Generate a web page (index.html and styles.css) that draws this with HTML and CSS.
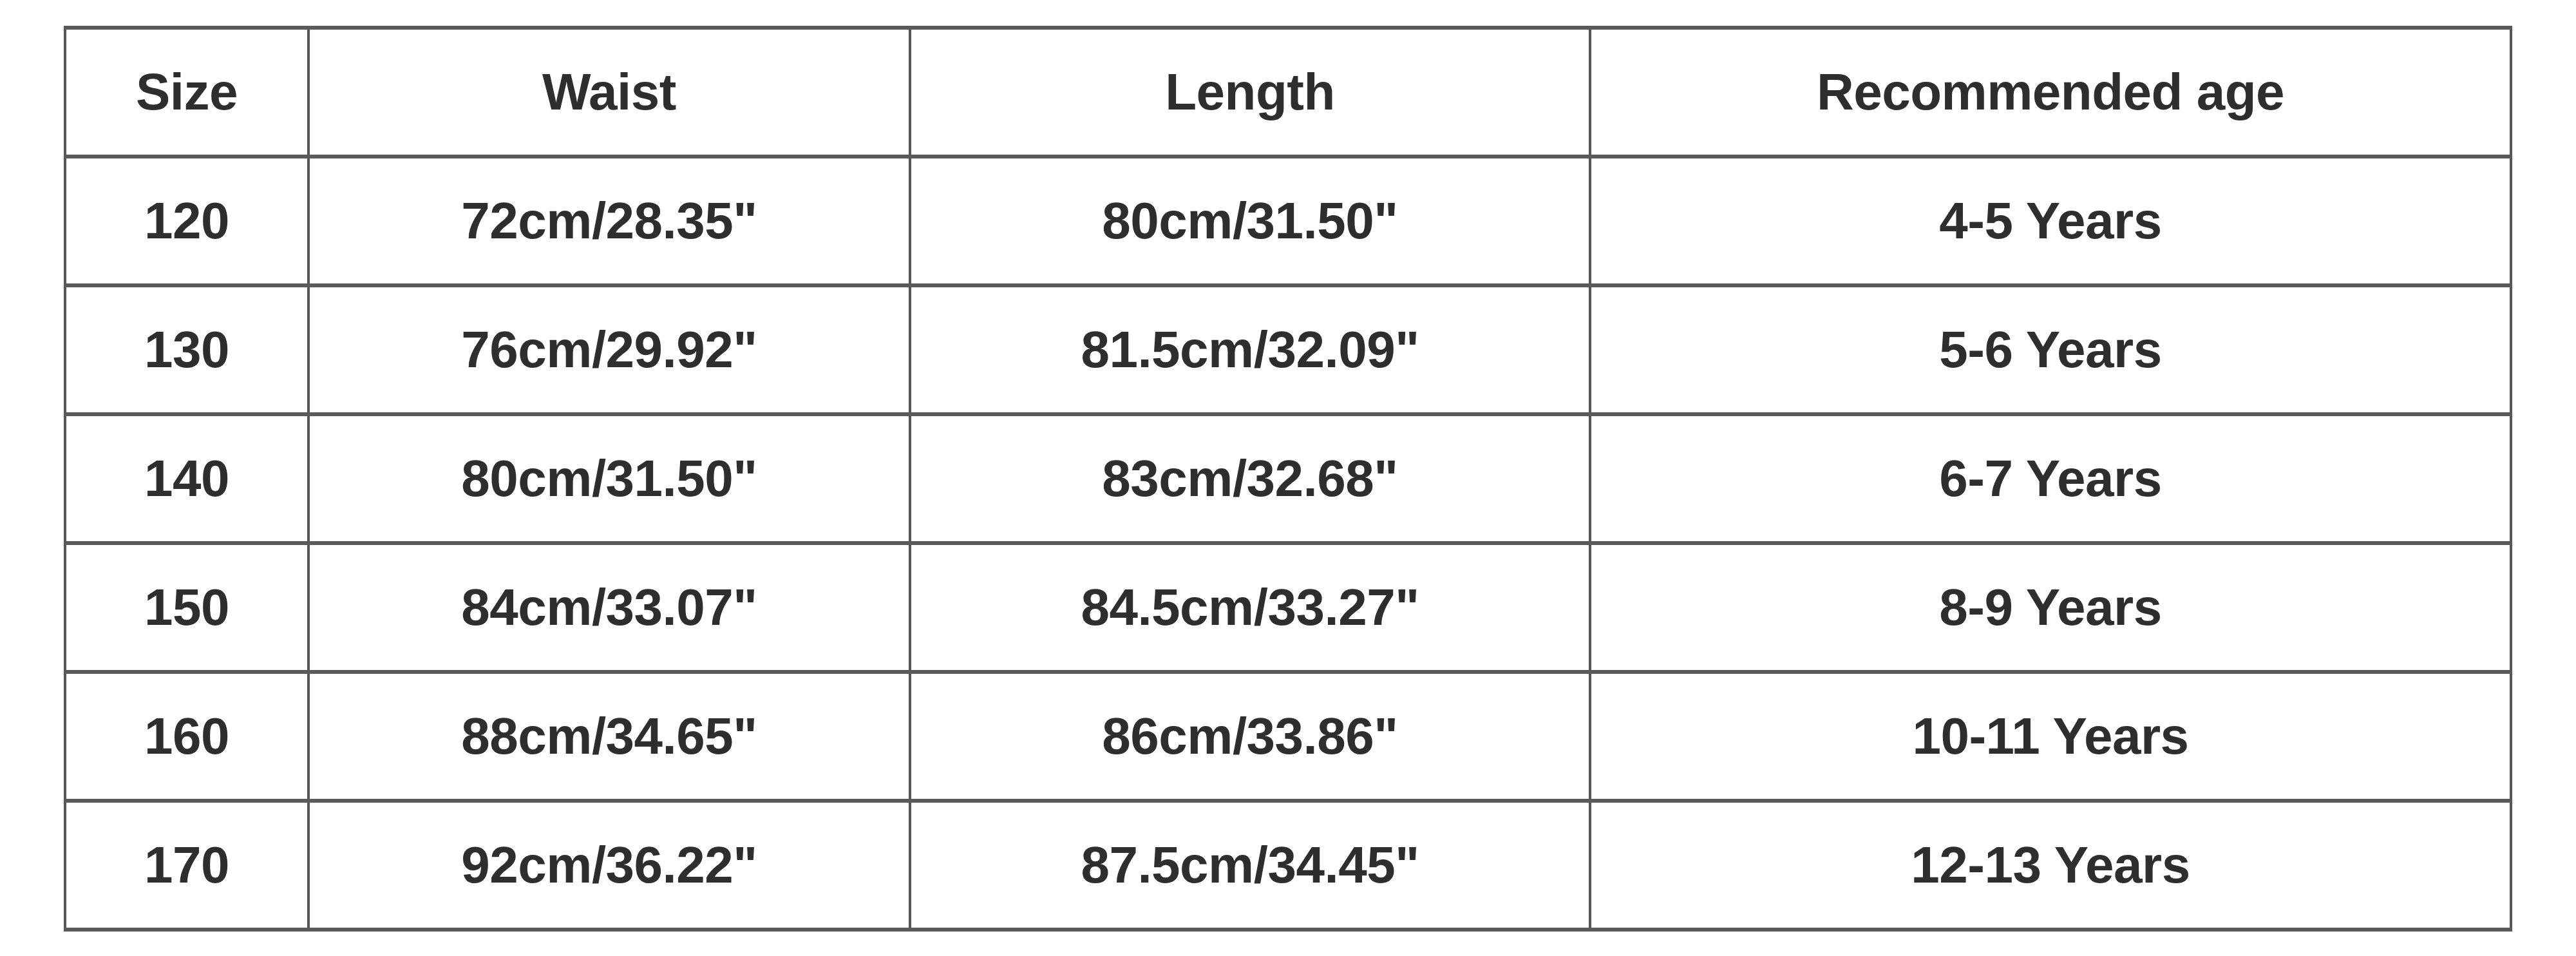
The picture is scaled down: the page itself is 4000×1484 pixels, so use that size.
FILE: index.html
```html
<!DOCTYPE html>
<html lang="en">
<head>
<meta charset="utf-8">
<title>Size chart</title>
<link rel="stylesheet" href="styles.css">
</head>
<body>
<div class="page">
  <table class="chart">
    <colgroup>
      <col class="c-size">
      <col class="c-waist">
      <col class="c-length">
      <col class="c-age">
    </colgroup>
    <thead>
      <tr><th>Size</th><th>Waist</th><th>Length</th><th>Recommended age</th></tr>
    </thead>
    <tbody>
      <tr><td>120</td><td>72cm/28.35"</td><td>80cm/31.50"</td><td>4-5 Years</td></tr>
      <tr><td>130</td><td>76cm/29.92"</td><td>81.5cm/32.09"</td><td>5-6 Years</td></tr>
      <tr><td>140</td><td>80cm/31.50"</td><td>83cm/32.68"</td><td>6-7 Years</td></tr>
      <tr><td>150</td><td>84cm/33.07"</td><td>84.5cm/33.27"</td><td>8-9 Years</td></tr>
      <tr><td>160</td><td>88cm/34.65"</td><td>86cm/33.86"</td><td>10-11 Years</td></tr>
      <tr><td>170</td><td>92cm/36.22"</td><td>87.5cm/34.45"</td><td>12-13 Years</td></tr>
    </tbody>
  </table>
</div>
</body>
</html>
```
FILE: styles.css
```css
html, body {
  margin: 0;
  padding: 0;
  background: #ffffff;
}

.page {
  padding: 40px 0 0 99px;
}

.chart {
  border-collapse: collapse;
  table-layout: fixed;
  width: 3798px;
  font-family: "Liberation Sans", Arial, sans-serif;
  font-weight: bold;
  font-size: 80px;
  letter-spacing: -0.5px;
  color: #2e2e2e;
}

.c-size { width: 378px; }
.c-waist { width: 934px; }
.c-length { width: 1056px; }
.c-age { width: 1430px; }

.chart tr {
  height: 200px;
}

.chart th,
.chart td {
  padding: 0;
  text-align: center;
  vertical-align: middle;
  font-weight: bold;
  border-top: 6px solid #5a5a5a;
  border-bottom: 6px solid #5a5a5a;
  border-left: 4px solid #555555;
  border-right: 4px solid #555555;
}
```
